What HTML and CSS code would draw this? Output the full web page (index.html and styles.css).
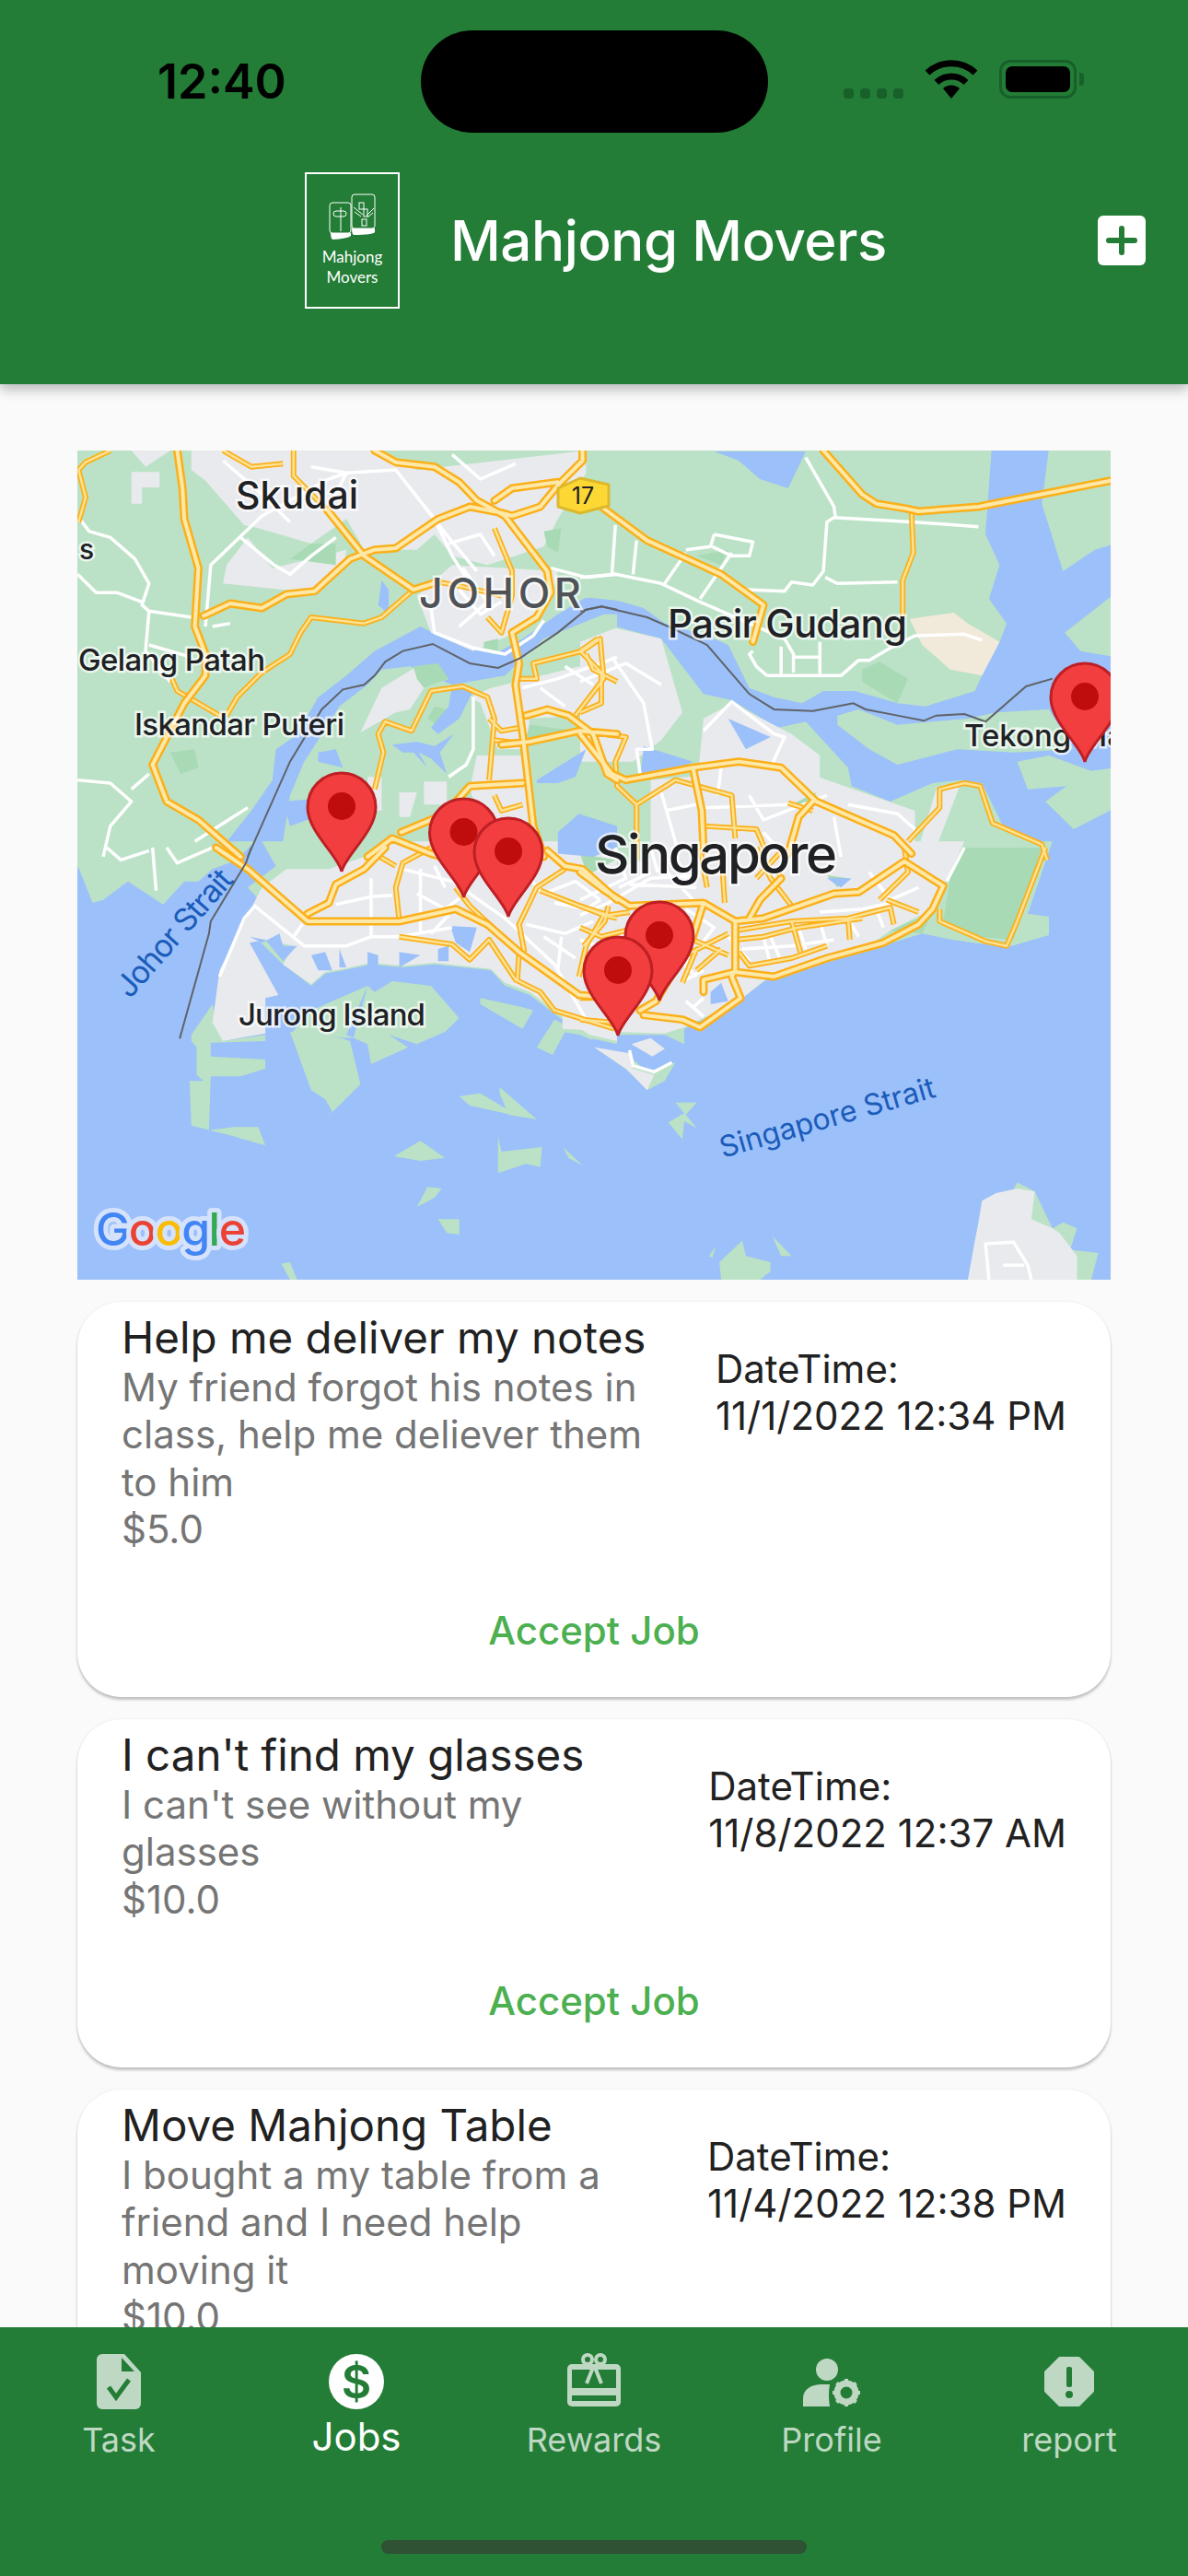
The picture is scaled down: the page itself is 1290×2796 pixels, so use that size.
FILE: index.html
```html
<!DOCTYPE html>
<html lang="en">
<head>
  <meta charset="UTF-8">
  <meta name="viewport" content="width=device-width, initial-scale=1.0">
  <title>Mahjong Movers</title>
  <link rel="stylesheet" href="styles.css">
</head>
<body>

<header class="topbar">
  <div class="status">
    <span class="clock">12:40</span>
    <span class="island"></span>
    <span class="signal"><i></i><i></i><i></i><i></i></span>
    <svg class="wifi" viewBox="0 0 58 42" width="58" height="42">
      <path d="M3 14A38 38 0 0 1 55 14" fill="none" stroke="#000" stroke-width="7"/>
      <path d="M13 24.500A23 23 0 0 1 45 24.500" fill="none" stroke="#000" stroke-width="7"/>
      <path d="M29 42L20 31A13 13 0 0 1 38 31Z"/>
    </svg>
    <span class="battery"><span class="battery-level"></span></span>
    <span class="battery-tip"></span>
  </div>
  <div class="appbar">
    <div class="logo">
      <svg class="logo-tiles" viewBox="0 0 52 50" width="52" height="50">
        <g fill="none" stroke="#fff" stroke-width="1">
          <rect x="1" y="10" width="23" height="33" rx="3"/>
          <rect x="25" y="1" width="25" height="37" rx="3"/>
          <rect x="5" y="19" width="14" height="6" rx="3"/>
          <path d="M13 15V41"/>
          <rect x="33" y="10" width="5" height="7"/>
          <rect x="38" y="17" width="4" height="8"/>
          <rect x="36" y="28" width="5" height="7"/>
          <path d="M27 15L37 23M49 16L41 24M28 20L35 25M48 21L42 26"/>
        </g>
        <path d="M2 43H24V46Q20 49 4 50Q2 48 2 43Z" fill="#fff"/>
        <path d="M25 38H50V42Q48 45 27 45Q25 44 25 38Z" fill="#fff"/>
      </svg>
      <span>Mahjong</span>
      <span>Movers</span>
    </div>
    <h1 class="app-title">Mahjong Movers</h1>
    <button class="add-btn">
      <svg viewBox="0 0 52 54" width="52" height="54"><path d="M26 14V40M12 27H40" stroke="#237d36" stroke-width="6" stroke-linecap="round"/></svg>
    </button>
  </div>
</header>

<main class="content">
  <svg class="map" viewBox="84 489 1122 900" width="1122" height="900">
    <defs>
      <g id="roads-white">
        <g transform="translate(70 480) scale(.3827 .3333)">
          <path d="M400 600L415 400L560 240L750 120L800 100L940 90L1050 250L1100 370L1150 460M37 240L70 290L130 310L200 380L240 460L220 530L240 550L360 570M240 550L230 680L300 780M37 430L90 490L150 490L220 520M240 660L360 700M420 600L470 590M500 310L595 400L640 430L700 370L770 310M940 90L1090 310L1170 420M1040 540L1050 620L1160 670L1250 690L1330 630L1360 580M37 1100L130 1110L190 1170L130 1250L110 1350M190 1130L240 1080M370 1300L520 1190M1568 430L1480 440L1380 410M1300 800L1400 770L1568 700M1160 830L1160 1000L1140 1050L1090 1090M450 60L560 170L640 260M700 80L800 100L760 190M1100 40L1180 120L1280 70M1130 410L1200 520L1120 600M1090 330L1180 300L1220 370M1120 480L1180 560L1240 520M1350 800L1420 860M1420 730L1500 790"/>
        </g>
        <g transform="translate(630 480) scale(.3827 .3333)">
          <path d="M0 440L100 430L230 460L340 520L420 560L580 640L605 690L605 750M470 480L580 485L600 455L660 465L690 420L700 260L720 245L950 260L1130 275M530 760L740 760L790 710L820 710L880 670L950 630L1090 625L1140 645M490 680L480 690L500 730L530 760M640 50L720 210L725 250M695 440L730 460L900 455M570 665L570 760M605 700L680 700M680 650L680 760M300 360L240 460M380 300L370 340L300 350M380 300L490 325L480 370L430 370L375 340M430 360L340 510M100 270L90 430M160 320L150 430M350 940L430 845L550 950L580 960L540 1060M90 700L180 850L205 1000L160 1000L170 1080M0 780L130 720L230 790M400 1060L390 1150M480 1150L520 1230L700 1150M230 1140L280 1340M350 1190L600 1180M760 1180L900 1210L950 1260M240 1200L330 1180M520 1270L580 1350M720 1220L740 1350"/>
        </g>
        <g transform="translate(70 920) scale(.3827 .3333)">
          <path d="M440 420L510 230L540 190L680 320L800 320L870 290L950 290L1100 260M650 290L675 250M770 185L870 160L930 155M870 100L870 290M1010 70L1010 280M960 70L1100 110L1250 230L1390 380L1480 560M1310 250L1420 280L1500 240M1410 290L1400 400M120 0L160 40L240 10M250 0L260 140M290 0L320 50L420 0M1050 60L1080 130M1000 150L1080 200L1150 140M1090 220L1040 280M1310 90L1360 150L1450 110L1520 170M1390 180L1480 200L1520 170M1360 290L1450 360"/>
        </g>
        <g transform="translate(630 920) scale(.3827 .3333)">
          <path d="M0 220L80 180L200 100L340 90M140 120L330 130M230 60L320 170M460 330L600 320L720 300M540 290L570 370M680 210L800 200L880 180M110 130L200 80M300 430L350 400M820 80L880 170L960 130M140 660L150 710L210 730L260 700M1160 1407L1150 1290L1230 1285L1270 1360L1280 1407M1200 1360L1260 1360M300 500L350 550M320 520L350 490M1040 110L1090 0M100 0L130 100L0 170M200 0L220 80M260 0L300 100M420 290L480 370M520 290L540 380M620 260L640 330M680 240L700 320M760 230L790 290M840 200L860 260M0 300L70 330L130 270M30 370L120 380M120 300L110 430M300 200L380 260L300 380M250 330L330 420"/>
        </g>
      </g>
      <g id="roads-minor">
        <g transform="translate(70 480) scale(.3827 .3333)">
          <path d="M305 770L320 810L440 890M450 27L530 80L620 70M650 27L650 110L745 220M1220 280L1270 420L1270 500L1240 620L1200 570M40 90L60 65L130 27M40 90L60 180L40 260M1290 770L1340 770L1330 720L1470 680L1520 640L1530 770L1450 890M1480 690L1500 740L1568 780M880 1130L905 1010L890 950L910 910L985 940L1040 810L1130 795L1200 830L1220 900L1205 1100M1205 900L1240 940L1290 930M1220 970L1290 980M1220 1150L1240 1200L1300 1180M990 480L900 570L850 590L700 570L670 620L640 690L560 750L490 830L460 890M1060 455L1130 470L1240 500"/>
        </g>
        <g transform="translate(630 480) scale(.3827 .3333)">
          <path d="M60 950L130 960L100 1040L105 1120L160 1180L160 1360M160 1180L270 1100L430 1150L440 1290M590 1175L660 1200M930 1300L1020 1190L1020 1130L1090 1110L1135 1120L1170 1240L1310 1310L1325 1360M350 1250L500 1260L530 1340M50 640L0 680L60 750L60 850L0 880M940 225L945 360L915 450L915 570"/>
        </g>
        <g transform="translate(70 920) scale(.3827 .3333)">
          <path d="M950 290L1100 315L1150 365L1205 300L1280 430L1350 470L1390 530L1560 590M1110 130L1150 190L1290 340L1285 430M1350 140L1530 220L1568 230M1530 220L1480 320L1460 420M950 240L940 130L960 50L1040 0M880 20L940 60M1420 70L1340 130L1290 250L1305 340"/>
        </g>
        <g transform="translate(630 920) scale(.3827 .3333)">
          <path d="M440 270L600 240L760 230L880 195L890 250M440 300L520 290L620 260L800 230M600 240L625 340M760 230L765 300M450 340L480 385L600 360L700 320M480 230L510 170L570 100L560 70M0 190L80 220L140 210M80 190L70 240L10 320M0 490L50 490L100 570L0 560M870 170L960 210M1020 200L1020 240L1150 305L1210 320L1240 240L1320 0M340 0L360 130M400 0L410 180M500 0L540 100L600 190M580 0L500 100M300 350L420 280M330 330L290 440M920 0L930 80L850 170M0 260L60 290L130 270L210 340M400 330L330 400M320 300L420 350"/>
        </g>
      </g>
      <g id="roads-major">
        <g transform="translate(70 480) scale(.3827 .3333)">
          <path d="M320 27L335 150L340 250L380 410L370 600L400 690L400 760L340 850L250 1050L290 1170L380 1230L500 1350M880 27L940 65L1050 80L1120 130L1170 190L1250 240L1370 420L1380 490L1340 570L1270 620L1290 720L1280 790L1300 950L1330 1250L1360 1350M395 565L470 525L560 540L630 495L710 485L810 380L880 350L940 345L1060 250L1150 210L1240 230L1270 240L1350 210L1400 140L1470 60L1470 27M1220 190L1270 150L1400 130M745 220L850 370L990 480L1060 455M1310 890L1370 870L1430 890L1500 950L1540 1080L1568 1100M1240 985L1320 975L1460 940L1568 950M955 1270L1080 1210L1150 1120L1300 1110M860 1350L930 1290L1040 1340L1070 1350"/>
        </g>
        <g transform="translate(630 480) scale(.3827 .3333)">
          <path d="M690 27L800 170L840 200L920 215L960 225L1130 210L1505 125M60 210L190 320L400 430L520 530L490 650M0 950L90 1080L130 1100L320 1060L450 1040L570 1060L670 1170L890 1280L940 1340M320 1060L345 1200L350 1330M660 1170L620 1220L590 1340"/>
        </g>
        <g transform="translate(70 920) scale(.3827 .3333)">
          <path d="M430 0L520 70L690 240L950 240L1110 200L1200 250L1290 340L1460 480L1568 490M690 215L750 180L770 120L850 70L910 0M1370 10L1420 60L1470 70L1568 170"/>
        </g>
        <g transform="translate(630 920) scale(.3827 .3333)">
          <path d="M0 80L70 140L140 190L350 180L440 240L520 230L720 150L790 145L920 45L1030 125M440 240L440 400L430 420L455 490L340 585L290 560L180 545M1030 125L1000 200L960 250L860 310L700 360L550 420L440 405L350 430L350 470M350 180L320 290L300 330L215 500L170 530M480 230L510 170L570 100"/>
        </g>
      </g>
      <g id="pin">
        <path d="M0 -2C-4 -20 -37 -45 -37 -72A37 37 0 0 1 37 -72C37 -45 4 -20 0 -2Z" fill="#f23e3f" stroke="#be1f24" stroke-width="3"/>
        <ellipse cx="0" cy="-73" rx="15" ry="15" fill="#bf0d0d"/>
      </g>
    </defs>

    <rect class="water" x="84" y="489" width="1122" height="900"/>

    <g class="land">
      <g transform="translate(70 480) scale(.3827 .3333)">
        <path d="M0 0L1600 0L1600 520L1480 505L1400 560L1300 640L1220 690L1100 650L1010 600L880 680L800 760L720 830L690 890L650 960L600 1000L590 1100L530 1200L440 1330L400 1350L0 1350Z"/>
        <path d="M1568 560L1530 560L1360 640L1250 760L1100 790L980 730L900 740L860 790L780 860L720 970L680 1040L640 1150L620 1300L640 1360L1568 1360Z"/>
      </g>
      <g transform="translate(630 480) scale(.3827 .3333)">
        <path d="M-50 -20L1170 -20L1150 300L1190 400L1160 510L1210 590L1190 650L1140 760L1120 810L980 860L900 850L780 810L690 810L630 850L550 830L480 800L420 660L360 630L240 590L180 540L60 500L0 510L-50 520Z"/>
        <path d="M1330 20L1520 20L1520 330L1460 350L1370 420L1310 200Z"/>
        <path d="M1520 490L1375 620L1420 680L1520 700Z"/>
        <path d="M730 890L790 870L900 920L1100 900L1180 880L1330 870L1400 1000L1230 1010L1070 1000L900 1050L820 1000L730 920Z"/>
        <path d="M1240 1040L1330 1020L1450 1070L1520 1060L1520 1190L1400 1260L1320 1170L1380 1120L1270 1130Z"/>
        <path d="M-50 660L100 600L230 640L350 820L430 840L560 930L640 910L760 1060L770 1120L880 1170L1000 1110L1080 1100L1140 1110L1200 1250L1320 1310L1330 1360L-50 1360Z"/>
      </g>
      <g transform="translate(70 920) scale(.3827 .3333)">
        <path d="M0 -20L540 -20L490 40L420 70L380 110L340 110L280 185L180 110L110 170L80 180L40 65L0 60Z"/>
        <path d="M560 -20L1568 -20L1568 640L1490 620L1400 550L1320 480L1250 450L1210 400L1050 380L960 390L870 380L790 400L740 410L700 450L620 380L540 290L600 230L520 130L600 60Z"/>
        <path d="M360 610L420 510L430 570L450 630L570 610L570 630L415 635L415 680L570 690L570 720L500 745L415 745L410 920L480 910L550 910L570 970L480 940L360 905L355 760L395 760L375 740L375 650L360 630Z"/>
        <path d="M640 600L785 620L810 630L840 770L735 890L760 860L740 820L700 790Z"/>
        <path d="M640 610L700 530L860 450L800 610L860 640L870 705L975 650L920 610L1000 640L1080 600L1120 555L1040 450L930 435L880 470L860 450L820 620Z"/>
        <path d="M1120 810L1180 800L1290 875L1150 840Z"/>
        <path d="M1235 780L1340 885L1260 870L1235 800Z"/>
        <path d="M935 1005L1010 955L1080 1010L1010 1020Z"/>
        <path d="M1230 940L1240 990L1355 975L1350 1040L1310 1030L1230 1060Z"/>
        <path d="M1415 975L1470 1035L1430 1010Z"/>
        <path d="M1000 1170L1030 1105L1070 1110L1050 1140Z"/>
        <path d="M1060 1210L1120 1210L1120 1260L1085 1255Z"/>
        <path d="M615 1355L640 1350L660 1407L640 1407Z"/>
        <path d="M1180 490L1300 520L1330 530L1300 590L1180 510Z"/>
        <path d="M1390 560L1430 580L1385 675L1340 650Z"/>
      </g>
      <g transform="translate(630 920) scale(.3827 .3333)">
        <path d="M-50 -20L1340 -20L1270 215L1330 225L1330 285L1210 325L1055 300L970 280L800 340L620 400L530 430L470 480L440 510L295 590L295 640L240 610L100 610L30 625L0 610L-50 600Z"/>
        <path d="M40 650L150 690L190 730L270 700L240 760L190 790L140 730Z"/>
        <path d="M270 830L330 830L300 870L332 915L295 890L290 950L250 895L295 865Z"/>
        <path d="M395 1350L460 1280L470 1330L540 1350L540 1380L510 1407L400 1407Z"/>
        <path d="M545 1265L600 1330L570 1330Z"/>
        <path d="M1340 1240L1370 1220L1410 1240L1390 1310L1470 1320L1450 1407L1100 1407L1240 1090L1290 1120Z"/>
        <path d="M365 1330L385 1300L375 1335Z"/>
      </g>
    </g>

    <g class="sand">
      <g transform="translate(630 480) scale(.3827 .3333)"><path d="M935 575L1060 555L1100 590L1190 650L1140 760L1050 740L970 660Z"/></g>
    </g>

    <g class="urban">
      <g transform="translate(70 480) scale(.3827 .3333)">
        <path d="M190 97H270V147H220V200H190Z"/>
        <path d="M190 27H300L230 80Z"/>
        <path d="M360 27L470 27L880 27L1000 90L1480 27L1480 100L1400 250L1360 340L1200 400L1100 370L1050 300L1000 350L850 350L800 250L700 330L550 280L510 270L400 125L360 90Z"/>
        <path d="M1100 400L1400 420L1380 520L1280 620L1160 680L1040 620L1000 500Z"/>
        <path d="M460 400L520 310L590 410L800 350L790 420L700 490L450 460Z"/>
        <path d="M1000 730L1090 770L1020 800L980 870L940 880L840 945L900 800Z"/>
        <path d="M1150 830L1210 800L1568 700L1568 860L1450 890L1320 900L1310 1000L1230 1000L1180 850Z"/>
        <path d="M950 1140H1000L980 1220H950Z"/>
        <path d="M1020 1105H1085V1180H1020Z"/>
        <path d="M860 1090H900V1200H860Z"/>
        <path d="M1170 1020H1320V1350H1220L1150 1130Z"/>
      </g>
      <g transform="translate(630 480) scale(.3827 .3333)">
        <path d="M0 650L100 605L230 640L290 880L230 970L150 1040L0 1040Z"/>
        <path d="M350 900L430 850L600 950L680 1020L680 1130L330 1130Z"/>
        <path d="M200 1100L600 1060L950 1200L950 1360L200 1360Z"/>
        <path d="M1010 1130L1080 1110L1000 1350L950 1360Z"/>
      </g>
      <g transform="translate(70 920) scale(.3827 .3333)">
        <path d="M560 130L630 70L750 70L850 30L930 -20L1568 -20L1568 630L1490 610L1400 540L1320 470L1250 440L1210 395L1050 375L960 385L870 375L790 395L740 405L700 445L620 380L650 320L570 300L525 310L607 480L570 490L570 605L450 630L420 570L440 400Z"/>
      </g>
      <g transform="translate(630 920) scale(.3827 .3333)">
        <path d="M-50 120L360 -20L1090 -20L1000 200L880 270L800 335L620 395L530 425L450 500L295 585L240 605L100 600L-50 590Z"/>
        <path d="M145 640L200 620L240 655L205 680Z"/>
        <path d="M40 650L140 670L150 720L210 740L190 790L130 720Z"/>
        <path d="M1100 1407L1120 1280L1130 1220L1140 1150L1180 1125L1240 1110L1290 1120L1280 1210L1340 1240L1360 1255L1410 1330L1410 1407Z"/>
      </g>
    </g>

    <g class="park">
      <g transform="translate(70 480) scale(.3827 .3333)">
        <path d="M1360 290L1410 280L1400 360L1370 340ZM1190 650L1230 640L1230 690L1190 680ZM990 730L1060 720L1090 770L1020 800L1000 770ZM1050 860L1110 880L1070 930L1030 900ZM300 1010L370 1000L380 1060L330 1080Z"/>
        <path d="M770 330L700 330L640 380L770 400ZM1320 920L1450 940L1340 970L1310 960Z"/>
      </g>
      <g transform="translate(630 480) scale(.3827 .3333)">
        <path d="M800 740L850 715L930 770L900 850L800 780ZM330 370L420 350L400 400Z"/>
        <path d="M600 1180L670 1140L650 1190Z"/>
      </g>
      <g transform="translate(630 920) scale(.3827 .3333)">
        <path d="M1030 240L1050 100L1090 0L1310 0L1230 300L1130 290ZM0 20L100 40L20 90ZM700 90L760 100L730 130Z"/>
        <path d="M880 270L1000 210L970 280Z"/>
      </g>
    </g>

    <g class="inlet">
      <g transform="translate(70 480) scale(.3827 .3333)">
        <path d="M930 985L1000 975L1050 990L1105 950L1065 1010L1085 1080L1040 1030L1005 1010L1030 1060L990 1010L960 1010ZM720 1010L770 1000L790 1060L720 1040ZM1340 1100L1480 1000L1450 1090L1400 1110L1340 1110ZM1400 1270L1460 1210L1568 1250L1568 1320L1500 1350L1400 1340ZM900 450L920 480L920 560L890 530Z"/>
        <path d="M1100 790L1160 810L1120 900L1060 950L1040 930L1090 860Z"/>
        <path d="M620 1170L720 1160L760 1200L640 1250Z"/>
      </g>
      <g transform="translate(630 480) scale(.3827 .3333)">
        <path d="M380 30L640 30L590 150L510 120L450 60ZM180 990L320 1040L230 1090L170 1100Z"/>
        <path d="M420 900L540 960L470 1000Z"/>
      </g>
      <g transform="translate(70 920) scale(.3827 .3333)">
        <path d="M1095 255L1170 260L1150 340L1110 310ZM525 290L560 310L610 280L620 320L660 320L620 370L570 300ZM700 350L740 340L760 400L720 400ZM780 330L800 390H780ZM860 340L890 350L890 385L860 385ZM950 340L1010 350L950 390ZM1060 330L1090 320L1090 370L1060 370Z"/>
      </g>
      <g transform="translate(630 920) scale(.3827 .3333)">
        <path d="M370 470L400 440L420 500L370 510ZM700 100L770 100L740 130Z"/>
      </g>
    </g>

    <g class="roads">
      <use class="road-white" href="#roads-white"/>
      <use class="road-minor" href="#roads-minor"/>
      <use class="road-minor-in" href="#roads-minor"/>
      <use class="road-major" href="#roads-major"/>
      <use class="road-major-in" href="#roads-major"/>
    </g>

    <g class="border">
      <g transform="translate(70 480) scale(.3827 .3333)"><path d="M520 1350L640 1040L730 870L790 805L850 790L880 760L910 715L960 680L1045 657L1150 720L1230 735L1290 705L1400 620L1480 545L1525 535L1568 545"/></g>
      <g transform="translate(630 480) scale(.3827 .3333)"><path d="M0 550L60 535L190 570L250 600L360 660L480 820L550 870L660 875L775 850L810 870L900 890L975 907L1010 890L1090 885L1150 910L1265 795L1340 770"/></g>
      <g transform="translate(70 920) scale(.3827 .3333)"><path d="M530 0L515 50L415 240L410 280L327 622"/></g>
    </g>

    <path d="M606 530L630 519L661 526V549L630 557L606 550Z" fill="#fdd835" stroke="#dcb92c" stroke-width="3" stroke-linejoin="round"/>
    <text class="shield-text" x="633" y="547" text-anchor="middle">17</text>

    <text class="label" x="256" y="552" font-size="41" textLength="133">Skudai</text>
    <text class="label" x="86" y="607" font-size="30">s</text>
    <text class="label label-region" x="455" y="660" font-size="45" textLength="180">JOHOR</text>
    <text class="label" x="725" y="692" font-size="42" textLength="260">Pasir Gudang</text>
    <text class="label" x="85" y="728" font-size="33" textLength="203">Gelang Patah</text>
    <text class="label" x="146" y="798" font-size="33" textLength="228">Iskandar Puteri</text>
    <text class="label" x="1047" y="810" font-size="33">Tekong Ma</text>
    <text class="label label-big" x="646" y="948" font-size="58" textLength="263">Singapore</text>
    <text class="label" x="259" y="1113" font-size="33" textLength="203">Jurong Island</text>
    <text class="sea" transform="translate(141 1085) rotate(-48.600)" font-size="34" textLength="172">Johor Strait</text>
    <text class="sea" transform="translate(785 1257) rotate(-16)" font-size="32" textLength="242">Singapore Strait</text>

    <use href="#pin" x="371" y="948"/>
    <use href="#pin" x="503.500" y="976"/>
    <use href="#pin" x="552" y="997"/>
    <use href="#pin" x="716" y="1088"/>
    <use href="#pin" x="671" y="1126"/>
    <use href="#pin" x="1178" y="829"/>

    <text class="google" x="104" y="1352" font-size="50" textLength="163"><tspan fill="#4285f4">G</tspan><tspan fill="#ea4335">o</tspan><tspan fill="#fbbc05">o</tspan><tspan fill="#4285f4">g</tspan><tspan fill="#34a853">l</tspan><tspan fill="#ea4335">e</tspan></text>
  </svg>

  <section class="card">
    <div class="card-row">
      <div class="card-info">
        <div class="card-title">Help me deliver my notes</div>
        <div class="card-desc">My friend forgot his notes in class, help me deliever them to him</div>
        <div class="card-desc">$5.0</div>
      </div>
      <div class="card-date">DateTime:<br>11/1/2022 12:34 PM</div>
    </div>
    <div class="card-action">Accept Job</div>
  </section>

  <section class="card">
    <div class="card-row">
      <div class="card-info">
        <div class="card-title">I can't find my glasses</div>
        <div class="card-desc">I can't see without my glasses</div>
        <div class="card-desc">$10.0</div>
      </div>
      <div class="card-date">DateTime:<br>11/8/2022 12:37 AM</div>
    </div>
    <div class="card-action">Accept Job</div>
  </section>

  <section class="card">
    <div class="card-row">
      <div class="card-info">
        <div class="card-title">Move Mahjong Table</div>
        <div class="card-desc">I bought a my table from a friend and I need help moving it</div>
        <div class="card-desc">$10.0</div>
      </div>
      <div class="card-date">DateTime:<br>11/4/2022 12:38 PM</div>
    </div>
    <div class="card-action"></div>
  </section>
</main>

<nav class="bottombar">
  <div class="nav-row">
    <div class="nav-item">
      <svg viewBox="0 0 60 60" width="60" height="60">
        <path d="M12 0H36L54 20V54A6 6 0 0 1 48 60H12A6 6 0 0 1 6 54V6A6 6 0 0 1 12 0Z" fill="#bfd8c4"/>
        <path d="M33 4V19H47Z" fill="#237d36"/>
        <path d="M19 36L27 47L41 28" fill="none" stroke="#237d36" stroke-width="5"/>
      </svg>
      <span class="nav-label">Task</span>
    </div>
    <div class="nav-item nav-item-active">
      <svg viewBox="0 0 60 60" width="60" height="60">
        <circle cx="30" cy="30" r="30" fill="#fff"/>
        <text class="dollar" x="30" y="48" text-anchor="middle">$</text>
      </svg>
      <span class="nav-label">Jobs</span>
    </div>
    <div class="nav-item">
      <svg viewBox="0 0 60 60" width="60" height="60">
        <rect x="1" y="11" width="58" height="46" rx="5" fill="#bfd8c4"/>
        <rect x="6" y="17" width="48" height="20" fill="#237d36"/>
        <rect x="6" y="45" width="48" height="6" fill="#237d36"/>
        <circle cx="23" cy="6" r="5" fill="none" stroke="#bfd8c4" stroke-width="4"/>
        <circle cx="37" cy="6" r="5" fill="none" stroke="#bfd8c4" stroke-width="4"/>
        <path d="M30 12L22 32M30 12L38 32" stroke="#bfd8c4" stroke-width="4" fill="none"/>
      </svg>
      <span class="nav-label">Rewards</span>
    </div>
    <div class="nav-item">
      <svg viewBox="0 0 60 60" width="60" height="60">
        <ellipse cx="25" cy="17" rx="12" ry="12" fill="#bfd8c4"/>
        <path d="M-1 57V48C-1 38 9 33 19 33H28Q26 44 28 57Z" fill="#bfd8c4"/>
        <circle cx="46" cy="42" r="10" fill="none" stroke="#bfd8c4" stroke-width="7"/>
        <path d="M46 27V57M31 42H61M35.500 31.500L56.500 52.500M56.500 31.500L35.500 52.500" stroke="#bfd8c4" stroke-width="4" fill="none"/>
        <circle cx="46" cy="42" r="6.500" fill="#237d36"/>
      </svg>
      <span class="nav-label">Profile</span>
    </div>
    <div class="nav-item">
      <svg viewBox="0 0 60 60" width="60" height="60">
        <path d="M20 5H40L55 20V40L40 55H20L5 40V20Z" fill="#bfd8c4" stroke="#bfd8c4" stroke-width="4" stroke-linejoin="round"/>
        <rect x="27" y="14" width="6" height="22" rx="2" fill="#237d36"/>
        <circle cx="30" cy="44" r="4" fill="#237d36"/>
      </svg>
      <span class="nav-label">report</span>
    </div>
  </div>
  <div class="home-bar"></div>
</nav>

</body>
</html>
```

FILE: styles.css
```css
body {
  font-family: Inter, "Noto Sans", sans-serif;
  margin: 0;
  padding: 0;
  width: 1290px;
  height: 2796px;
  overflow: hidden;
  display: flex;
  flex-direction: column;
  background-color: #fafafa;
}

/* top bar */
.topbar {
  flex: 0 0 417px;
  background-color: #237d36;
  box-shadow: 0 6px 12px rgba(0, 0, 0, 0.25);
  position: relative;
  z-index: 2;
}
.status {
  height: 187px;
  display: flex;
  align-items: flex-start;
  box-sizing: border-box;
}
.clock {
  margin: 57px 0 0 171px;
  width: 141px;
  font-size: 52px;
  line-height: 63px;
  font-weight: 600;
  color: #000;
}
.island {
  margin: 33px 0 0 145px;
  width: 377px;
  height: 111px;
  border-radius: 56px;
  background-color: #000;
}
.signal {
  margin: 96px 0 0 82px;
  width: 65px;
  display: flex;
  justify-content: space-between;
}
.signal i {
  width: 11px;
  height: 11px;
  border-radius: 4px;
  background-color: #17602a;
}
.wifi {
  margin: 65px 0 0 23px;
}
.battery {
  margin: 65px 0 0 23px;
  width: 84px;
  height: 42px;
  box-sizing: border-box;
  border: 3px solid #17602a;
  border-radius: 12px;
  padding: 4px;
}
.battery-level {
  display: block;
  height: 100%;
  border-radius: 7px;
  background-color: #000;
}
.battery-tip {
  margin: 79px 0 0 3px;
  width: 5px;
  height: 14px;
  border-radius: 0 4px 4px 0;
  background-color: #17602a;
}
.appbar {
  display: flex;
  align-items: center;
  padding-left: 331px;
  height: 148px;
}
.logo {
  box-sizing: border-box;
  width: 103px;
  height: 148px;
  padding-top: 21px;
  border: 2.5px solid #fff;
  display: flex;
  flex-direction: column;
  align-items: center;
  font-family: Lato, sans-serif;
  font-size: 17px;
  line-height: 22px;
  color: #fff;
}
.logo-tiles {
  margin-bottom: 8px;
}
.app-title {
  margin: 0 0 0 55px;
  font-size: 60px;
  font-weight: 500;
  letter-spacing: -0.4px;
  color: #fff;
  line-height: 72px;
}
.add-btn {
  margin: 0 46px 0 auto;
  padding: 0;
  border: none;
  width: 52px;
  height: 54px;
  background-color: #fff;
  border-radius: 6px;
}
.add-btn svg {
  display: block;
}

/* map */
.content {
  flex: 1;
  overflow: hidden;
  padding: 72px 84px 0;
}
.map {
  display: block;
}
.map path {
  vector-effect: non-scaling-stroke;
}
.water {
  fill: #9cc0f9;
}
.land {
  fill: #bbe2c6;
}
.sand {
  fill: #f1eadb;
}
.urban {
  fill: #e9eaee;
}
.park {
  fill: #a8dab5;
}
.inlet {
  fill: #9cc0f9;
}
.roads {
  fill: none;
  stroke-linejoin: round;
}
.road-white {
  stroke: #fff;
  stroke-width: 3.500;
}
.road-minor {
  stroke: #fbb01a;
  stroke-width: 6;
}
.road-minor-in {
  stroke: #fde293;
  stroke-width: 2.500;
}
.road-major {
  stroke: #fbb01a;
  stroke-width: 9;
  stroke-linecap: round;
}
.road-major-in {
  stroke: #fde8a8;
  stroke-width: 4;
  stroke-linecap: round;
}
.border {
  fill: none;
  stroke: #5f6368;
  stroke-width: 2;
}
.shield-text {
  font-family: Inter, sans-serif;
  font-size: 25px;
  fill: #202124;
}
.label {
  fill: #202124;
  font-weight: 500;
  stroke: rgba(255, 255, 255, 0.7);
  stroke-width: 5px;
  paint-order: stroke;
}
.label-region {
  fill: #4f5358;
  letter-spacing: 4px;
}
.sea {
  fill: #1a5cba;
}
.google {
  font-family: Inter, sans-serif;
  font-weight: 500;
  stroke: #d5e2fb;
  stroke-width: 10px;
  paint-order: stroke;
  stroke-linejoin: round;
}

/* job cards */
.card {
  margin-top: 24px;
  background-color: #fff;
  border-radius: 48px;
  box-shadow: 0 3px 3px rgba(0, 0, 0, 0.22), 0 0 3px rgba(0, 0, 0, 0.08);
}
.card-row {
  display: flex;
  padding: 9px 48px 0 48px;
}
.card-info {
  width: 575px;
}
.card-title {
  padding-top: 2px;
  font-size: 47.500px;
  line-height: 56px;
  color: #212121;
  white-space: nowrap;
}
.card-desc {
  font-size: 42px;
  line-height: 51.300px;
  color: #757575;
}
.card-date {
  margin: 38px 0 0 auto;
  font-size: 42px;
  line-height: 51.300px;
  color: #212121;
  white-space: nowrap;
}
.card-action {
  margin-top: 59px;
  padding-bottom: 47px;
  min-height: 51px;
  text-align: center;
  font-size: 42px;
  line-height: 51px;
  font-weight: 500;
  color: #4caf50;
}

/* bottom nav */
.bottombar {
  flex: 0 0 270px;
  background-color: #237d36;
  position: relative;
  z-index: 2;
}
.nav-row {
  height: 231px;
  box-sizing: border-box;
  padding-top: 29px;
  display: flex;
}
.nav-item {
  flex: 1;
  display: flex;
  flex-direction: column;
  align-items: center;
}
.nav-item svg {
  overflow: visible;
}
.nav-label {
  margin-top: 11px;
  font-size: 36px;
  line-height: 44px;
  color: #bfd8c4;
}
.nav-item-active .nav-label {
  margin-top: 8px;
  font-size: 42px;
  color: #fff;
}
.dollar {
  font-size: 50px;
  font-weight: 600;
  fill: #237d36;
}
.home-bar {
  width: 462px;
  height: 15px;
  margin: 0 auto;
  border-radius: 8px;
  background-color: #2e5233;
}
```
